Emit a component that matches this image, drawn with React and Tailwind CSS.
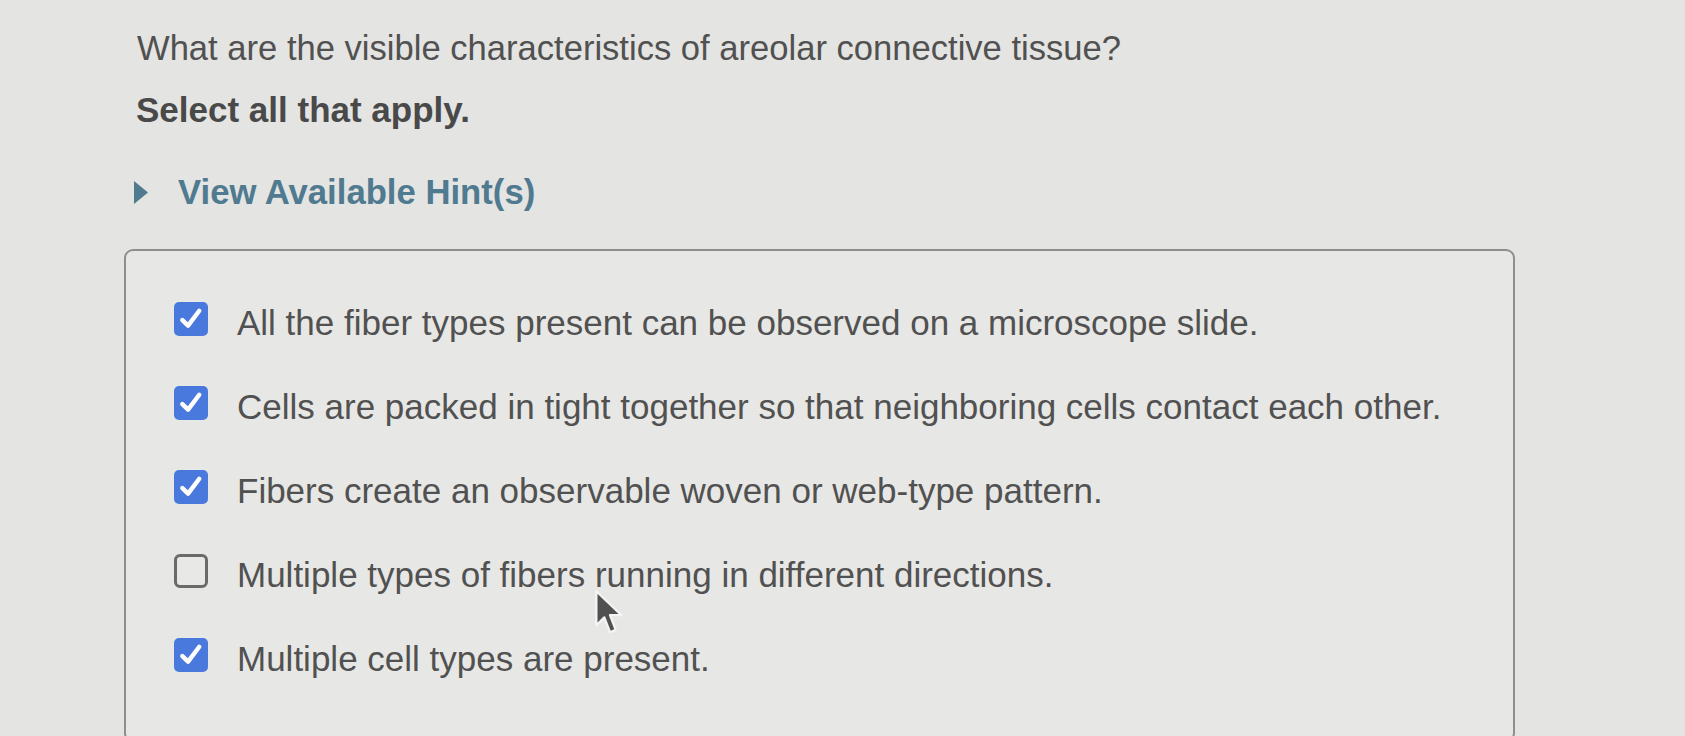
const options = [
  { text: 'All the fiber types present can be observed on a microscope slide.', checked: true },
  { text: 'Cells are packed in tight together so that neighboring cells contact each other.', checked: true },
  { text: 'Fibers create an observable woven or web-type pattern.', checked: true },
  { text: 'Multiple types of fibers running in different directions.', checked: false },
  { text: 'Multiple cell types are present.', checked: true },
];

function Checkbox({ checked }) {
  if (!checked) {
    return (
      <span className="w-[34px] h-[34px] -translate-y-[4px] flex-shrink-0 rounded-[6px] border-[3px] border-[#6a6a6a] bg-[#e8e8e6]" />
    );
  }
  return (
    <span className="w-[34px] h-[34px] -translate-y-[4px] flex-shrink-0 rounded-[5px] bg-[#4a79dd] flex items-center justify-center">
      <svg width="32" height="32" viewBox="0 0 24 24" fill="none">
        <path d="M5.5 12.8 L9.8 17 L18.2 5.8" stroke="white" strokeWidth="3.3" strokeLinecap="round" strokeLinejoin="round" />
      </svg>
    </span>
  );
}

function Cursor() {
  return (
    <svg className="absolute left-[592px] top-[589px]" width="36" height="50" viewBox="0 0 30 44">
      <path d="M3 2 L3 32 L10 25 L15 38 L20 36 L15 23 L25 23 Z" fill="#505050" stroke="#f4f4f4" strokeWidth="2" strokeLinejoin="round" />
    </svg>
  );
}

export default function App() {
  return (
    <div className="relative w-[1685px] h-[736px] overflow-hidden bg-[#e4e4e2] text-[#515151] pl-[124px] pt-[28px]" style={{ fontFamily: '"Liberation Sans", Arial, sans-serif' }}>
      <h1 className="ml-[13px] text-[34.6px] leading-[40px] font-normal">
        What are the visible characteristics of areolar connective tissue?
      </h1>
      <p className="ml-[12px] mt-[22px] text-[35px] leading-[40px] font-bold text-[#494949]">
        Select all that apply.
      </p>
      <div className="ml-[9px] mt-[42px] flex items-center gap-[29px] text-[#4f7a8f]">
        <svg width="16" height="25" viewBox="0 0 16 25">
          <path d="M1 1 L15 12.5 L1 24 Z" fill="#4f7a8f" />
        </svg>
        <span className="text-[34.7px] leading-[40px] font-bold">View Available Hint(s)</span>
      </div>
      <div className="mt-[37px] w-[1391px] rounded-[9px] border-2 border-[#8e8e8c] bg-[#e7e7e5] pl-[48px] pt-[51px] pb-[60px] flex flex-col gap-[42px]">
        {options.map((o) => (
          <label key={o.text} className="flex items-center gap-[29px] text-[35px] leading-[42px]">
            <Checkbox checked={o.checked} />
            <span>{o.text}</span>
          </label>
        ))}
      </div>
      <Cursor />
    </div>
  );
}
